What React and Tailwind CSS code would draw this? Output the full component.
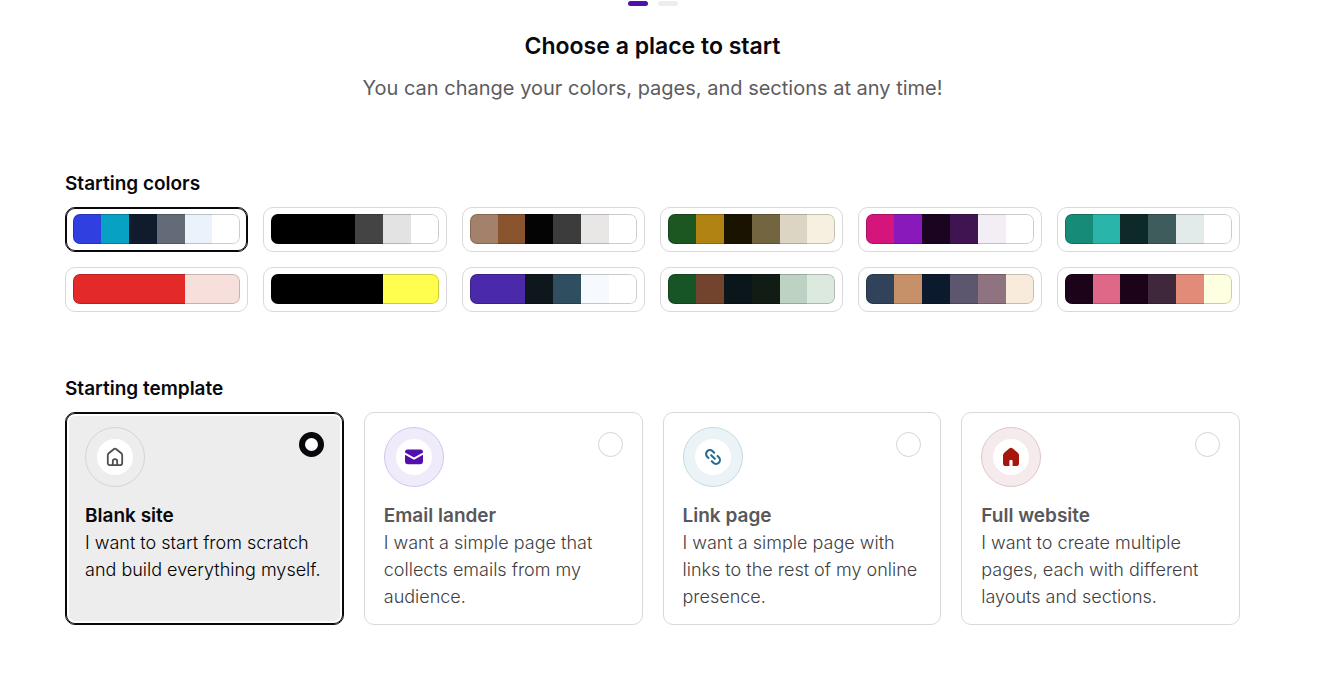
const palettes = [
  { name: "Ocean", colors: ["bg-[#2f3fe0]", "bg-[#06a1c3]", "bg-[#101c2e]", "bg-[#646b78]", "bg-[#eaf2fc]", "bg-white"] },
  { name: "Monochrome", colors: ["bg-black", "bg-black", "bg-black", "bg-[#444444]", "bg-[#e3e3e3]", "bg-white"] },
  { name: "Cocoa", colors: ["bg-[#a3816a]", "bg-[#88552e]", "bg-[#040404]", "bg-[#3c3c3c]", "bg-[#e9e7e6]", "bg-white"] },
  { name: "Meadow", colors: ["bg-[#1c5722]", "bg-[#b18312]", "bg-[#1a1301]", "bg-[#73653f]", "bg-[#ddd5c3]", "bg-[#f5f0df]"] },
  { name: "Magenta", colors: ["bg-[#d6157c]", "bg-[#8a19bb]", "bg-[#1a0420]", "bg-[#401450]", "bg-[#f3eef6]", "bg-white"] },
  { name: "Lagoon", colors: ["bg-[#168c78]", "bg-[#29b5a9]", "bg-[#0d2928]", "bg-[#3f5c5c]", "bg-[#e3ebea]", "bg-white"] },
  { name: "Scarlet", colors: ["bg-[#e42a28]", "bg-[#e42a28]", "bg-[#e42a28]", "bg-[#e42a28]", "bg-[#f7e0dc]", "bg-[#f7e0dc]"] },
  { name: "Taxi", colors: ["bg-black", "bg-black", "bg-black", "bg-black", "bg-[#fffd4e]", "bg-[#fffd4e]"] },
  { name: "Violet", colors: ["bg-[#4b29ab]", "bg-[#4b29ab]", "bg-[#0d171c]", "bg-[#2f4f60]", "bg-[#f6f9fd]", "bg-white"] },
  { name: "Forest", colors: ["bg-[#185526]", "bg-[#72442e]", "bg-[#0a161a]", "bg-[#101c14]", "bg-[#bed2c3]", "bg-[#dce9df]"] },
  { name: "Dusk", colors: ["bg-[#30435a]", "bg-[#c69068]", "bg-[#0b1b2d]", "bg-[#5c576f]", "bg-[#8f7380]", "bg-[#f8ebdc]"] },
  { name: "Sunset", colors: ["bg-[#1c031a]", "bg-[#df6788]", "bg-[#1c031a]", "bg-[#3f273c]", "bg-[#e18b78]", "bg-[#fefee0]"] },
];

function HomeOutline() {
  return (
    <svg viewBox="0 0 24 24" className="size-6" fill="none" stroke="currentColor" strokeWidth="1.8" strokeLinecap="round" strokeLinejoin="round" aria-hidden="true">
      <path d="M4.800 10.200c0-.8.3-1.400.9-1.900l5-4.100a2 2 0 0 1 2.600 0l5 4.100c.6.5.9 1.100.9 1.900v7.800a2.200 2.200 0 0 1-2.200 2.200H7a2.200 2.200 0 0 1-2.200-2.200z" />
      <path d="M9.800 20v-3.600a2.200 2.200 0 0 1 4.400 0V20" />
    </svg>
  );
}

function MailSolid() {
  return (
    <svg viewBox="0 0 24 24" className="size-6" fill="currentColor" aria-hidden="true">
      <path d="M3 7.600V7.200A2.700 2.700 0 0 1 5.700 4.500h12.600A2.700 2.700 0 0 1 21 7.200v.4l-9 5z" />
      <path d="M3 9.800l8.500 4.700a1 1 0 0 0 1 0L21 9.800v6.500a3 3 0 0 1-3 3H6a3 3 0 0 1-3-3z" />
    </svg>
  );
}

function ChainLink() {
  return (
    <svg viewBox="0 0 24 24" className="size-6" fill="none" stroke="currentColor" strokeWidth="2.400" strokeLinecap="round" aria-hidden="true">
      <g transform="rotate(45 12 12) scale(.86) translate(1.950 1.950)">
        <path d="M9 16.500H7a4.500 4.500 0 0 1 0-9h2.500M15 7.500h2a4.500 4.500 0 0 1 0 9h-2.500M9 12h6" />
      </g>
    </svg>
  );
}

function HomeSolid() {
  return (
    <svg viewBox="0 0 24 24" className="size-6" fill="currentColor" aria-hidden="true">
      <path d="M4 10.300c0-1 .4-1.800 1.200-2.500l5-4.200a2.800 2.800 0 0 1 3.600 0l5 4.200c.8.7 1.200 1.500 1.200 2.500v7.900a2.800 2.800 0 0 1-2.800 2.800h-3.600v-5a1 1 0 0 0-1-1h-1.200a1 1 0 0 0-1 1v5H6.800A2.800 2.800 0 0 1 4 18.200z" />
    </svg>
  );
}

const templates = [
  { id: "blank", title: "Blank site", text: "I want to start from scratch and build everything myself.", Icon: HomeOutline, tone: "border-[#d4d4d4] bg-[#ededed] text-[#4f4f52]" },
  { id: "email", title: "Email lander", text: "I want a simple page that collects emails from my audience.", Icon: MailSolid, tone: "border-[#d3c6ee] bg-[#f0ebfa] text-[#530fad]" },
  { id: "link", title: "Link page", text: "I want a simple page with links to the rest of my online presence.", Icon: ChainLink, tone: "border-[#c0dce4] bg-[#ebf3f7] text-[#1f6e93]" },
  { id: "full", title: "Full website", text: "I want to create multiple pages, each with different layouts and sections.", Icon: HomeSolid, tone: "border-[#dfc6c6] bg-[#f6ebec] text-[#a6160f]" },
];

function PaletteOption({ palette, selected }) {
  return (
    <label className="relative block cursor-pointer rounded-[10px] border border-[#d9d9dc] px-[7px] pt-1.5 pb-[7px] has-checked:border-[#08080d] has-checked:inset-ring has-checked:inset-ring-[#08080d]">
      <input type="radio" name="palette" value={palette.name} defaultChecked={selected} aria-label={palette.name} className="sr-only" />
      <span className="relative flex h-[30px] overflow-hidden rounded-[7px]">
        {palette.colors.map((color, i) => (
          <span key={i} className={`flex-1 ${color}`} />
        ))}
        <span className="absolute inset-0 rounded-[7px] border border-black/20" />
      </span>
    </label>
  );
}

function TemplateOption({ template, selected }) {
  const { id, title, text, Icon, tone } = template;
  return (
    <label className="group cursor-pointer rounded-[10px] border border-[#d9d9dc] px-[19px] py-3.5 text-[#58585b] has-checked:border-[#08080d] has-checked:bg-[#ededee] has-checked:text-[#08080d] has-checked:shadow-[inset_0_0_0_1px_#08080d,inset_0_0_0_3px_#ffffff]">
      <span className="flex items-start justify-between">
        <span className={`flex size-[60px] items-center justify-center rounded-full border ${tone}`}>
          <span className="flex size-9 items-center justify-center rounded-full bg-white">
            <Icon />
          </span>
        </span>
        <input
          type="radio"
          name="template"
          value={id}
          defaultChecked={selected}
          className="mt-[5px] size-[25px] appearance-none rounded-full border border-[#d4d4d8] bg-white checked:border-6 checked:border-[#08080d]"
        />
      </span>
      <span className="mt-4 block text-[19px] leading-[26px] font-semibold">{title}</span>
      <span className="block text-lg leading-[27px] font-light text-[#404043] group-has-checked:text-black">{text}</span>
    </label>
  );
}

export default function App() {
  return (
    <main className="bg-white pr-[104px] pb-[60px] pl-[65px] font-[Inter,sans-serif] text-[#08080d]">
      <div className="flex justify-center gap-2.5 pt-px" role="img" aria-label="Step 1 of 2">
        <span className="h-[5px] w-5 rounded-full bg-[#530fad]" />
        <span className="h-[5px] w-5 rounded-full bg-[#ededee]" />
      </div>
      <header className="pt-6 text-center">
        <h1 className="text-[23px] leading-8 font-semibold">Choose a place to start</h1>
        <p className="mt-2.5 text-xl leading-8 text-[#5c5c5f]">You can change your colors, pages, and sections at any time!</p>
      </header>

      <fieldset className="mt-[66px]">
        <legend className="text-[19px] leading-7 font-semibold">Starting colors</legend>
        <div className="mt-[9px] grid grid-cols-6 gap-[15px]">
          {palettes.map((palette, i) => (
            <PaletteOption key={palette.name} palette={palette} selected={i === 0} />
          ))}
        </div>
      </fieldset>

      <fieldset className="mt-[63px]">
        <legend className="text-[19px] leading-7 font-semibold">Starting template</legend>
        <div className="mt-[9px] grid grid-cols-4 gap-5">
          {templates.map((template, i) => (
            <TemplateOption key={template.id} template={template} selected={i === 0} />
          ))}
        </div>
      </fieldset>
    </main>
  );
}
